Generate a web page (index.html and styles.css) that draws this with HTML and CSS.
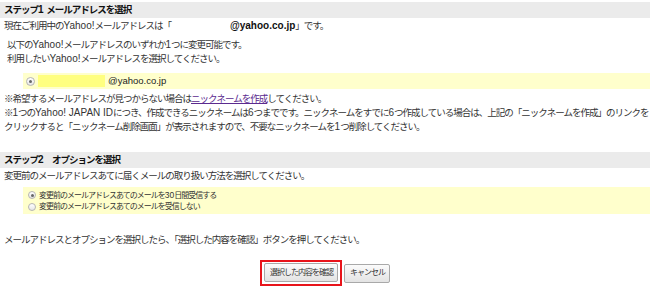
FILE: index.html
```html
<!DOCTYPE html>
<html lang="ja">
<head>
<meta charset="utf-8">
<title>メールアドレスを選択</title>
<link rel="stylesheet" href="styles.css">
</head>
<body>
<div class="page">
  <div class="step-head">ステップ<span class="en">1 </span>メールアドレスを選択</div>
  <p class="current">現在ご利用中の<span class="en">Yahoo!</span>メールアドレスは「<span class="blank"></span><b class="addr en">@yahoo.co.jp</b>」です。</p>
  <p class="intro">以下の<span class="en">Yahoo!</span>メールアドレスのいずれか<span class="en">1</span>つに変更可能です。<br>利用したい<span class="en">Yahoo!</span>メールアドレスを選択してください。</p>
  <div class="choice-band">
    <label class="choice"><span class="radio checked"></span><span class="mask"></span><span class="domain en">@yahoo.co.jp</span></label>
  </div>
  <p class="notes">※希望するメールアドレスが見つからない場合は<a class="link" href="#">ニックネームを作成</a>してください。<br>※<span class="en">1</span>つの<span class="en">Yahoo! JAPAN ID</span>につき、作成できるニックネームは<span class="en">6</span>つまでです。ニックネームをすでに<span class="en">6</span>つ作成している場合は、上記の「ニックネームを作成」のリンクを<br>クリックすると「ニックネーム削除画面」が表示されますので、不要なニックネームを<span class="en">1</span>つ削除してください。</p>
  <div class="step-head step2">ステップ<span class="en">2</span>　オプションを選択</div>
  <p class="lead">変更前のメールアドレスあてに届くメールの取り扱い方法を選択してください。</p>
  <div class="option-band">
    <label class="option"><span class="radio small checked"></span><span>変更前のメールアドレスあてのメールを<span class="en">30</span>日間受信する</span></label>
    <label class="option"><span class="radio small"></span><span>変更前のメールアドレスあてのメールを受信しない</span></label>
  </div>
  <p class="final">メールアドレスとオプションを選択したら、「選択した内容を確認」ボタンを押してください。</p>
  <div class="actions">
    <span class="confirm-wrap"><button class="btn" type="button">選択した内容を確認</button></span>
    <button class="btn" type="button">キャンセル</button>
  </div>
</div>
</body>
</html>
```
FILE: styles.css
```css
html, body {
  margin: 0;
  padding: 0;
  background: #fff;
}
body {
  font-family: "Liberation Sans", "Noto Sans CJK JP", sans-serif;
  font-size: 9.5px;
  letter-spacing: -1px;
  line-height: 14px;
  color: #333;
}
.en {
  font-size: 10px;
  letter-spacing: 0;
}
.page {
  padding-top: 2px;
}
p {
  margin: 0;
}
.step-head {
  background: #ebebeb;
  height: 16px;
  line-height: 16px;
  padding-left: 4px;
  font-weight: bold;
  color: #111;
}
.current {
  margin-top: 1px;
  padding-left: 4px;
  white-space: nowrap;
}
.blank {
  display: inline-block;
  width: 59px;
}
.addr {
  color: #111;
}
.intro {
  margin-top: 5px;
  padding-left: 7px;
  white-space: nowrap;
}
.choice-band {
  margin: 7px 0 0 23px;
  height: 16px;
  background: #ffffcc;
  display: flex;
  align-items: center;
}
.choice {
  display: flex;
  align-items: center;
  padding-left: 3px;
}
.radio {
  width: 7px;
  height: 7px;
  border-radius: 50%;
  border: 1px solid #b5b5b5;
  background: linear-gradient(#fff, #e6e6e6);
  display: inline-flex;
  align-items: center;
  justify-content: center;
  box-sizing: content-box;
  flex: none;
}
.radio.checked::after {
  content: "";
  width: 3px;
  height: 3px;
  border-radius: 50%;
  background: #666;
}
.mask {
  display: inline-block;
  width: 67px;
  height: 12px;
  background: #ffff80;
  margin-left: 3px;
}
.domain {
  margin-left: 3px;
  font-size: 9.5px;
  color: #222;
}
.notes {
  margin-top: 3px;
  padding-left: 4px;
  white-space: nowrap;
}
.link {
  color: #5b2a8f;
  text-decoration: underline;
}
.step2 {
  margin-top: 18px;
}
.lead {
  margin-top: 1px;
  padding-left: 4px;
}
.option-band {
  margin: 4px 0 0 23px;
  background: #ffffcc;
  padding: 2px 0 1px 5px;
  display: flex;
  flex-direction: column;
}
.option {
  display: flex;
  align-items: center;
  gap: 3px;
  height: 12px;
  font-size: 8px;
  color: #333;
}
.option .en {
  font-size: 8.5px;
}
.radio.small {
  width: 6px;
  height: 6px;
}
.final {
  margin-top: 19px;
  padding-left: 4px;
}
.actions {
  margin-top: 13px;
  display: flex;
  justify-content: center;
  align-items: center;
  gap: 2px;
}
.confirm-wrap {
  border: 2px solid #e8141b;
  padding: 1px 2px 2px 2px;
  display: flex;
}
.btn {
  font-family: "Liberation Sans", "Noto Sans CJK JP", sans-serif;
  font-size: 8px;
  letter-spacing: -1px;
  line-height: 10px;
  color: #333;
  height: 19px;
  padding: 0 4px 0 5px;
  border: 1px solid #a9a9a9;
  border-radius: 2px;
  background: linear-gradient(#fbfbfb, #e3e3e3);
  cursor: pointer;
}
```
